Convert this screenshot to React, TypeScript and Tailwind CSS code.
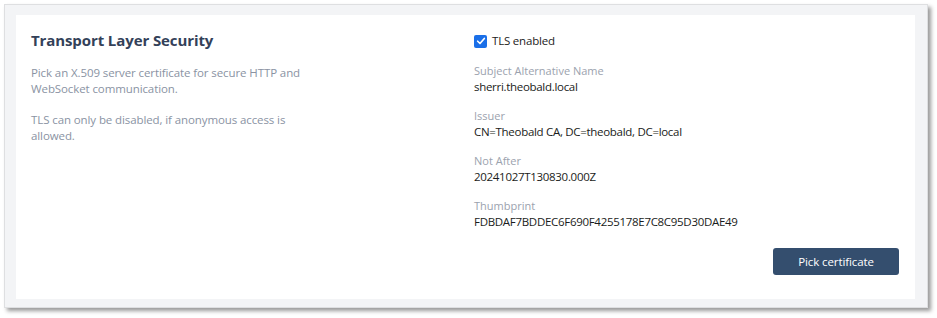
const font = { fontFamily: '"Open Sans", "Liberation Sans", sans-serif' };

const fields = [
  { label: 'Subject Alternative Name', value: 'sherri.theobald.local' },
  { label: 'Issuer', value: 'CN=Theobald CA, DC=theobald, DC=local' },
  { label: 'Not After', value: '20241027T130830.000Z' },
  { label: 'Thumbprint', value: 'FDBDAF7BDDEC6F690F4255178E7C8C95D30DAE49' },
];

export default function App() {
  return (
    <div className="w-[937px] h-[318px] bg-white pt-[4px] pl-[4px]" style={font}>
      <div className="w-[924px] h-[304px] bg-[#f3f4f6] border border-[#dedfe1] shadow-[3px_3px_4px_rgba(0,0,0,0.4)] pt-[10px] pl-[11px] pr-[12px] pb-[8px]">
        <div className="h-full bg-white grid grid-cols-2 gap-[18px] pl-[15px] pr-[16px] pt-[13px] pb-[24px]">
          <div>
            <h2 className="text-[15px] leading-[24px] font-bold text-[#334159] tracking-[-0.1px]">
              Transport Layer Security
            </h2>
            <p className="mt-[13px] text-[11.5px] leading-[16px] text-[#8a93a3] tracking-[-0.1px] max-w-[290px]">
              Pick an X.509 server certificate for secure HTTP and WebSocket communication.
            </p>
            <p className="mt-[15px] text-[11.5px] leading-[16px] text-[#8a93a3] tracking-[-0.1px] max-w-[290px]">
              TLS can only be disabled, if anonymous access is allowed.
            </p>
          </div>
          <div className="flex flex-col">
            <label className="flex items-center gap-[5px] h-[20px] mt-[3px]">
              <span className="w-[13px] h-[13px] rounded-[2px] bg-[#1a6fe8] flex items-center justify-center">
                <svg viewBox="0 0 12 12" className="w-[10px] h-[10px]">
                  <path d="M2 6.3 4.8 9 10 3" fill="none" stroke="white" strokeWidth="2" strokeLinecap="round" strokeLinejoin="round" />
                </svg>
              </span>
              <span className="text-[11.5px] tracking-[-0.2px] text-[#222]">TLS enabled</span>
            </label>
            <div className="mt-[11px] flex flex-col gap-[12px]">
              {fields.map((f) => (
                <div key={f.label}>
                  <div className="text-[11px] leading-[17px] text-[#9ba2ae]">{f.label}</div>
                  <div className="text-[11.5px] leading-[16px] tracking-[-0.3px] text-[#1a1c20]">{f.value}</div>
                </div>
              ))}
            </div>
            <div className="mt-auto flex justify-end">
              <button className="w-[126px] h-[27px] rounded-[3px] bg-[#344e6e] text-white text-[11.5px] tracking-[-0.1px]">
                Pick certificate
              </button>
            </div>
          </div>
        </div>
      </div>
    </div>
  );
}
